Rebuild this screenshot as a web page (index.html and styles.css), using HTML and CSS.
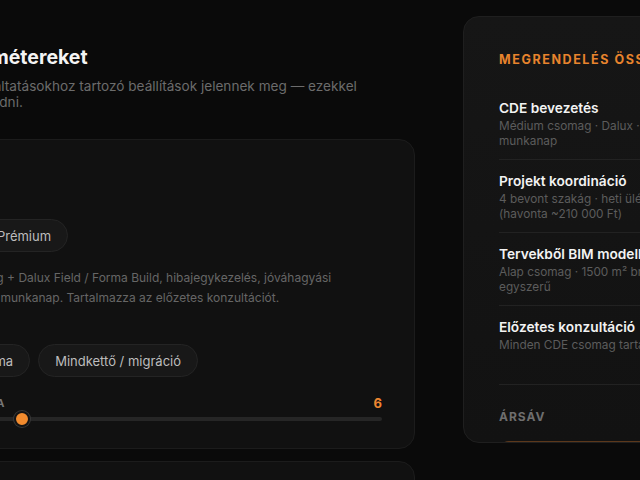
FILE: index.html
```html
<!DOCTYPE html>
<html lang="hu">

<head>
    <meta charset="UTF-8" />
    <meta name="viewport" content="width=device-width, initial-scale=1.0" />
    <title>Ajánlatkérés - BIM szolgáltatások</title>
    <link rel="stylesheet" href="styles.css">
</head>

<body>
    <div class="layout">
        <main class="main">
            <h2 class="step-title">Állítsd be most a paramétereket</h2>
            <p class="step-lead">Itt most csak a kiválasztott szolgáltatásokhoz tartozó beállítások jelennek meg — ezekkel az adatokat pontosan lehet megadni.</p>

            <section class="card">
                <h3 class="card-title">CDE bevezetés</h3>

                <div class="field field-first">
                    <div class="field-label">Csomag</div>
                    <div class="chips">
                        <button class="chip">Alap</button>
                        <button class="chip">Médium</button>
                        <button class="chip">Prémium</button>
                    </div>
                    <p class="field-desc">Bővített bevezetés: Alap csomag + Dalux Field / Forma Build, hibajegykezelés, jóváhagyási folyamatok. Határidő: kb. 8 – 10 munkanap. Tartalmazza az előzetes konzultációt.</p>
                </div>

                <div class="field">
                    <div class="field-label">Platform</div>
                    <div class="chips">
                        <button class="chip">Dalux</button>
                        <button class="chip">Autodesk Forma</button>
                        <button class="chip">Mindkettő / migráció</button>
                    </div>
                </div>

                <div class="field field-range">
                    <div class="range-head">
                        <span class="field-label">CDE felhasználók száma</span>
                        <span class="range-value">6</span>
                    </div>
                    <input class="range" type="range" min="1" max="15" value="6" />
                </div>
            </section>

            <section class="card">
                <h3 class="card-title">Projekt koordináció</h3>
            </section>
        </main>

        <aside class="summary">
            <h4 class="summary-title">Megrendelés összesítő</h4>

            <div class="summary-list">
                <div class="summary-item">
                    <div class="item-info">
                        <div class="item-name">CDE bevezetés</div>
                        <div class="item-meta">Médium csomag · Dalux · 8–10 munkanap</div>
                    </div>
                    <div class="item-price">480 000 Ft</div>
                </div>
                <div class="summary-item">
                    <div class="item-info">
                        <div class="item-name">Projekt koordináció</div>
                        <div class="item-meta">4 bevont szakág · heti ülések (havonta ~210 000 Ft)</div>
                    </div>
                    <div class="item-price">1 260 000 Ft</div>
                </div>
                <div class="summary-item">
                    <div class="item-info">
                        <div class="item-name">Tervekből BIM modell</div>
                        <div class="item-meta">Alap csomag · 1500 m² bruttó · egyszerű</div>
                    </div>
                    <div class="item-price">690 000 Ft</div>
                </div>
                <div class="summary-item">
                    <div class="item-info">
                        <div class="item-name">Előzetes konzultáció</div>
                        <div class="item-meta">Minden CDE csomag tartalmazza</div>
                    </div>
                    <div class="item-price">0 Ft</div>
                </div>
            </div>

            <div class="summary-total">
                <div class="total-label">Ársáv</div>
                <div class="total-box">2 430 000 – 2 800 000 Ft</div>
            </div>
        </aside>
    </div>
</body>

</html>
```

FILE: styles.css
```css
body {
    margin: 0;
    font-family: Inter, 'Noto Sans', sans-serif;
    background-color: #0a0a0a;
    color: #eee;
    overflow: hidden;
}

.layout {
    display: grid;
    grid-template-columns: 629px 340px;
    column-gap: 48px;
    align-items: start;
    margin-left: -214px;
    padding-top: 16px;
}

/* left column */
.step-title {
    margin: 29px 0 0;
    font-size: 19.5px;
    line-height: 24px;
    font-weight: 700;
    color: #f4f4f4;
}

.step-lead {
    max-width: 580px;
    margin: 9px 0 29px;
    font-size: 13.6px;
    line-height: 16px;
    color: #6c6c6c;
}

.card {
    background-color: #111;
    border: 1px solid #1c1c1c;
    border-radius: 16px;
    padding: 23px 32px 20px;
    margin-bottom: 12px;
}

.card-title {
    margin: 0;
    font-size: 16px;
    line-height: 22px;
    font-weight: 600;
    color: #eee;
}

.field {
    margin-top: 13px;
}

.field-first {
    margin-top: 11px;
}

.field-label {
    margin-bottom: 9px;
    font-size: 11px;
    line-height: 14px;
    font-weight: 700;
    letter-spacing: 1.3px;
    text-transform: uppercase;
    color: #777;
}

.chips {
    display: flex;
    gap: 8px;
}

.chip {
    height: 33px;
    padding: 0 16px;
    border: 1px solid #242424;
    border-radius: 17px;
    background-color: #181818;
    color: #bdbdbd;
    font-family: inherit;
    font-size: 13px;
    cursor: pointer;
}

.field-desc {
    margin: 16px 0 0;
    font-size: 12px;
    line-height: 20px;
    color: #666;
}

.field-range {
    margin-top: 19px;
}

.range-head {
    display: flex;
    justify-content: space-between;
    align-items: center;
}

.range-head .field-label {
    margin-bottom: 0;
}

.range-value {
    font-size: 13px;
    line-height: 14px;
    font-weight: 700;
    color: #ee8630;
}

.range {
    -webkit-appearance: none;
    appearance: none;
    display: block;
    width: 100%;
    height: 18px;
    margin: 0;
    background: transparent;
}

.range::-webkit-slider-runnable-track {
    height: 4px;
    border-radius: 2px;
    background-color: #262626;
}

.range::-webkit-slider-thumb {
    -webkit-appearance: none;
    width: 16px;
    height: 16px;
    margin-top: -6px;
    border-radius: 50%;
    border: 2px solid #141414;
    background-color: #f28b2e;
    box-shadow: 0 0 0 1px #383838;
}

/* order summary */
.summary {
    height: 427px;
    box-sizing: border-box;
    overflow: hidden;
    padding: 34px 35px 0;
    background: linear-gradient(180deg, #161616, #121212);
    border: 1px solid #1f1f1f;
    border-radius: 16px;
}

.summary-title {
    margin: 0 0 18px;
    font-size: 12.5px;
    line-height: 18px;
    font-weight: 700;
    letter-spacing: 1.6px;
    text-transform: uppercase;
    color: #e8842d;
}

.summary-item {
    display: flex;
    justify-content: space-between;
    gap: 16px;
    padding: 12px 0 10px;
    border-bottom: 1px solid #222;
}

.summary-item:last-child {
    border-bottom: none;
}

.item-info {
    max-width: 210px;
}

.item-name {
    font-size: 13.7px;
    line-height: 18px;
    font-weight: 600;
    color: #f2f2f2;
}

.item-meta {
    margin-top: 2px;
    font-size: 11.8px;
    line-height: 15px;
    color: #5c5c5c;
}

.item-price {
    font-size: 14px;
    font-weight: 600;
    color: #ddd;
    white-space: nowrap;
}

.summary-total {
    margin-top: 21px;
    padding-top: 24px;
    border-top: 1px solid #222;
}

.total-label {
    font-size: 12px;
    line-height: 16px;
    font-weight: 700;
    letter-spacing: 1px;
    text-transform: uppercase;
    color: #6e6e6e;
}

.total-box {
    margin-top: 16px;
    padding: 16px;
    border: 1px solid rgba(238, 134, 48, 0.3);
    border-radius: 10px;
    background-color: rgba(238, 134, 48, 0.06);
    color: #ee8630;
    font-weight: 700;
}
```
